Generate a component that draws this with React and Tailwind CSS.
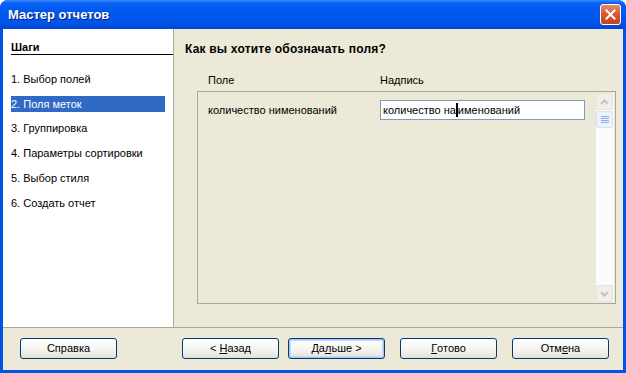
import React from "react";

const font = { fontFamily: '"Liberation Sans", Arial, sans-serif' };

function Btn({ children, def, className = "" }) {
  return (
    <div
      className={
        "h-[21px] w-[97px] rounded-[3px] border border-[#003C74] flex items-center justify-center text-[11px] text-black bg-[linear-gradient(180deg,#FFFFFF_0%,#F4F3EE_60%,#E3E1D6_100%)] " +
        (def ? "shadow-[inset_0_0_0_1px_#A9C4F5,inset_0_0_0_2px_#C8DAF8] " : "") +
        className
      }
    >
      {children}
    </div>
  );
}

function ScrollBtn({ up }) {
  return (
    <div className="w-[17px] h-[17px] rounded-[2px] border border-[#E5E4DC] bg-[#F0EFE9] flex items-center justify-center">
      <svg width="9" height="6" viewBox="0 0 9 6">
        {up ? (
          <path d="M1 5 L4.5 1.5 L8 5" fill="none" stroke="#C5C3B8" strokeWidth="2" />
        ) : (
          <path d="M1 1 L4.5 4.5 L8 1" fill="none" stroke="#C5C3B8" strokeWidth="2" />
        )}
      </svg>
    </div>
  );
}

export default function App() {
  const steps = [
    "1. Выбор полей",
    "2. Поля меток",
    "3. Группировка",
    "4. Параметры сортировки",
    "5. Выбор стиля",
    "6. Создать отчет",
  ];
  return (
    <div style={font} className="w-[626px] h-[373px] flex flex-col bg-[#0055E5] rounded-t-[8px] overflow-hidden">
      {/* Title bar */}
      <div className="h-[29px] shrink-0 flex items-center justify-between pl-[8px] pr-[5px] bg-[linear-gradient(180deg,#3F8EFF_0%,#0A62F5_10%,#0058EE_35%,#0056EA_75%,#0047D6_100%)]">
        <span className="text-white font-bold text-[13px] [text-shadow:1px_1px_0_#0A1E80]">Мастер отчетов</span>
        <div className="w-[21px] h-[21px] rounded-[3px] border border-white bg-[linear-gradient(180deg,#E9896B_0%,#D6592F_50%,#C7401C_100%)] flex items-center justify-center">
          <svg width="11" height="11" viewBox="0 0 11 11">
            <path d="M1.5 1.5 L9.5 9.5 M9.5 1.5 L1.5 9.5" stroke="white" strokeWidth="2" strokeLinecap="square" />
          </svg>
        </div>
      </div>
      {/* Body */}
      <div className="flex-1 flex flex-col mx-[3px] mb-[3px] bg-[#ECE9D8]">
        <div className="h-[298px] shrink-0 flex">
          {/* Left steps panel */}
          <div className="w-[171px] shrink-0 bg-white border-r border-[#ACA899] pl-[8px] pt-[11px]">
            <div className="border-b border-black h-[15px] flex items-end pb-[1px]">
              <span className="font-bold text-[11px] text-black leading-none">Шаги</span>
            </div>
            <div className="flex flex-col mt-[16px] gap-[8.8px]">
              {steps.map((s, i) => (
                <div
                  key={s}
                  className={
                    "h-[16px] w-[154px] flex items-center text-[11px] " +
                    (i === 1 ? "bg-[#316AC5] text-white" : "text-black")
                  }
                >
                  {s}
                </div>
              ))}
            </div>
          </div>
          {/* Right content */}
          <div className="flex-1 flex flex-col pl-[11px] pr-[7px]">
            <div className="mt-[13px] h-[14px] flex items-center font-bold text-[12px] text-black tracking-[0.2px]">
              Как вы хотите обозначать поля?
            </div>
            <div className="mt-[17px] h-[14px] flex items-center text-[11px] text-black">
              <span className="ml-[23px] w-[172px]">Поле</span>
              <span>Надпись</span>
            </div>
            <div className="mt-[4px] ml-[12px] h-[213px] border border-[#ACA899] flex">
              <div className="flex-1 flex items-start pt-[8px]">
                <span className="ml-[10px] w-[172px] text-[11px] text-black mt-[2px]">количество нименований</span>
                <div className="w-[205px] h-[20px] border border-[#7F9DB9] bg-white flex items-center pl-[2px] text-[11px] text-black">
                  количество на
                  <span className="inline-block w-[2px] h-[14px] bg-black" />
                  именований
                </div>
              </div>
              <div className="w-[18px] my-[1px] mr-[1px] bg-[#FCFCFA] flex flex-col justify-between">
                <div className="flex flex-col gap-[1px]">
                  <ScrollBtn up />
                  <div className="w-[17px] h-[17px] rounded-[2px] border border-[#D6E1F5] bg-[#EDF2FC] flex flex-col items-center justify-center gap-[1px]">
                    <div className="w-[8px] h-[1px] bg-[#8CAAE6]" />
                    <div className="w-[8px] h-[1px] bg-[#8CAAE6]" />
                    <div className="w-[8px] h-[1px] bg-[#8CAAE6]" />
                    <div className="w-[8px] h-[1px] bg-[#8CAAE6]" />
                  </div>
                </div>
                <ScrollBtn />
              </div>
            </div>
          </div>
        </div>
        {/* Bottom buttons */}
        <div className="flex-1 border-t border-[#ACA899] flex items-center pl-[17px] pb-[1px]">
          <Btn>Справка</Btn>
          <Btn className="ml-[65px]">
            &lt;&nbsp;<span className="underline">Н</span>азад
          </Btn>
          <Btn def className="ml-[9px]">
            Да<span className="underline">л</span>ьше &gt;
          </Btn>
          <Btn className="ml-[15px]">
            <span className="underline">Г</span>отово
          </Btn>
          <Btn className="ml-[15px]">
            Отм<span className="underline">е</span>на
          </Btn>
        </div>
      </div>
    </div>
  );
}
